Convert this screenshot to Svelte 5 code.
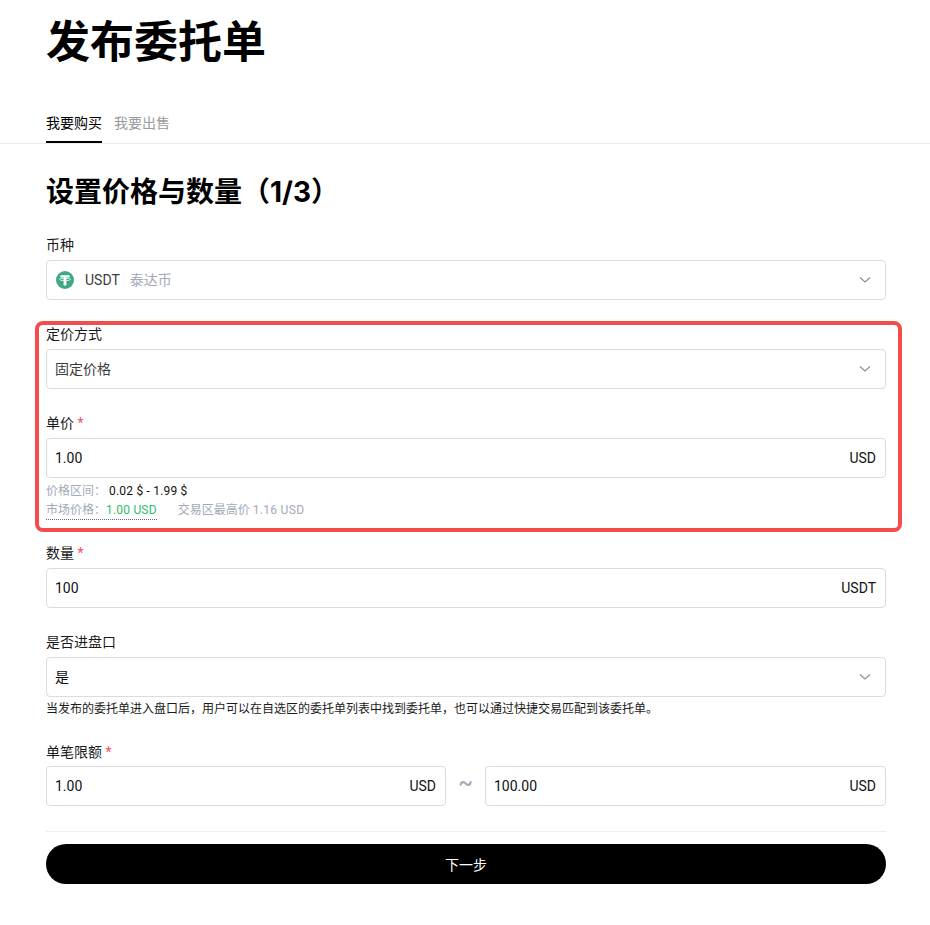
<script>
	const tabs = ['我要购买', '我要出售'];
</script>

{#snippet chevron()}
	<svg class="chevron" viewBox="0 0 12 8" width="12" height="8" aria-hidden="true">
		<path d="M1 1.5 L6 6 L11 1.5" />
	</svg>
{/snippet}

<main class="page">
	<h1>发布委托单</h1>

	<div class="tabs">
		{#each tabs as tab, i}
			<span class="tab" class:active={i === 0}>{tab}</span>
		{/each}
	</div>

	<form class="form">
		<h2>设置价格与数量（1/3）</h2>

		<div class="field">
			<div class="label">币种</div>
			<div class="box">
				<svg class="coin" viewBox="0 0 18 18" width="18" height="18" aria-hidden="true">
					<circle cx="9" cy="9" r="9" fill="#3fa886" />
					<path d="M4.4 4.2 H13.6 V6.6 H10.4 V14.4 H7.6 V6.6 H4.4 Z" fill="#fff" />
					<ellipse cx="9" cy="8.4" rx="5.6" ry="1.2" fill="none" stroke="#fff" stroke-width="0.7" />
				</svg>
				<span class="value">USDT</span>
				<span class="coin-name">泰达币</span>
				<span class="spacer"></span>
				{@render chevron()}
			</div>
		</div>

		<div class="field">
			<div class="label">定价方式</div>
			<div class="box">
				<span class="value">固定价格</span>
				<span class="spacer"></span>
				{@render chevron()}
			</div>
		</div>

		<div class="field price">
			<div class="label">单价 <em>*</em></div>
			<div class="box">
				<span class="value strong">1.00</span>
				<span class="spacer"></span>
				<span class="unit">USD</span>
			</div>
			<div class="hints">
				<div><span class="muted">价格区间：</span><span class="range">0.02 $ - 1.99 $</span></div>
				<div>
					<span class="market"><span class="muted">市场价格：</span><span class="green">1.00 USD</span></span>
					<span class="muted top">交易区最高价 <span class="num">1.16 USD</span></span>
				</div>
			</div>
		</div>

		<div class="field">
			<div class="label">数量 <em>*</em></div>
			<div class="box">
				<span class="value strong">100</span>
				<span class="spacer"></span>
				<span class="unit">USDT</span>
			</div>
		</div>

		<div class="field">
			<div class="label">是否进盘口</div>
			<div class="box">
				<span class="value strong">是</span>
				<span class="spacer"></span>
				{@render chevron()}
			</div>
			<p class="desc">当发布的委托单进入盘口后，用户可以在自选区的委托单列表中找到委托单，也可以通过快捷交易匹配到该委托单。</p>
		</div>

		<div class="field limits">
			<div class="label">单笔限额 <em>*</em></div>
			<div class="limit-row">
				<div class="box">
					<span class="value strong">1.00</span>
					<span class="spacer"></span>
					<span class="unit">USD</span>
				</div>
				<span class="tilde">~</span>
				<div class="box">
					<span class="value strong">100.00</span>
					<span class="spacer"></span>
					<span class="unit">USD</span>
				</div>
			</div>
		</div>

		<div class="footer">
			<button type="button" class="next">下一步</button>
		</div>
	</form>

	<div class="highlight"></div>
</main>

<style>
	:global(body) {
		margin: 0;
		background: #fff;
	}

	.page {
		position: relative;
		height: 925px;
		overflow: hidden;
		font-family: Roboto, "Noto Sans CJK SC", sans-serif;
		color: #000;
		font-size: 14px;
	}

	h1 {
		margin: 0;
		padding: 17px 0 0 46px;
		height: 79px;
		box-sizing: content-box;
		font-size: 44px;
		line-height: 52px;
		font-weight: 700;
	}

	.tabs {
		display: flex;
		gap: 12px;
		margin-top: 8px;
		padding-left: 46px;
		border-bottom: 1px solid #ececec;
		height: 39px;
		box-sizing: content-box;
	}

	.tab {
		line-height: 38px;
		height: 39px;
		color: #9b9b9b;
		box-sizing: border-box;
	}

	.tab.active {
		color: #000;
		border-bottom: 2px solid #000;
		height: 39px;
	}

	.form {
		width: 840px;
		margin-left: 46px;
	}

	h2 {
		margin: 28px 0 0;
		font-family: Inter, "Noto Sans CJK SC", sans-serif;
		font-size: 28px;
		line-height: 40px;
		font-weight: 700;
		height: 63px;
	}

	.field {
		margin-bottom: 24px;
	}

	.label {
		line-height: 20px;
		margin-bottom: 5px;
		color: #1a1a1a;
	}

	.label em {
		color: #f0545a;
		font-style: normal;
	}

	.box {
		display: flex;
		align-items: center;
		height: 40px;
		box-sizing: border-box;
		padding: 0 9px 0 8px;
		border: 1px solid #dcdcdc;
		border-radius: 4px;
		background: #fff;
		min-width: 0;
	}

	.box > span {
		line-height: 36px;
	}

	.spacer {
		flex: 1;
	}

	.coin {
		margin: 0 11px 0 1px;
	}

	.value {
		color: #3c3c3c;
	}

	.value.strong,
	.unit {
		color: #111;
	}

	.coin-name {
		color: #a3a9b8;
		margin-left: 10px;
	}

	.chevron {
		margin-right: 5px;
	}

	.chevron path {
		fill: none;
		stroke: #8d8d8d;
		stroke-width: 1.1;
	}

	.price {
		margin-bottom: 0;
		height: 130px;
	}

	.hints {
		margin-top: 4px;
		font-size: 12px;
		line-height: 19px;
	}

	.muted {
		color: #a3a9b8;
	}

	.range {
		margin-left: 3px;
		color: #111;
		letter-spacing: 0.2px;
	}

	.market {
		border-bottom: 1px dotted #5a6a9a;
		padding-bottom: 2px;
	}

	.green {
		color: #2fbd68;
		letter-spacing: 0.2px;
	}

	.top {
		margin-left: 18px;
	}

	.num {
		letter-spacing: 0.3px;
	}

	.desc {
		margin: 3px 0 0;
		font-size: 12px;
		line-height: 18px;
		color: #1a1a1a;
	}

	.limit-row {
		display: grid;
		grid-template-columns: 400px 39px 1fr;
		align-items: center;
	}

	.tilde {
		text-align: center;
		font-size: 22px;
		font-weight: 500;
		color: #a3a9b8;
		line-height: 1;
		margin-top: -6px;
	}

	.limits {
		margin-bottom: 25px;
	}

	.limits .label {
		margin-bottom: 4px;
	}

	.footer {
		border-top: 1px solid #eee;
		padding-top: 12px;
	}

	.next {
		display: block;
		width: 100%;
		height: 40px;
		border: 0;
		border-radius: 20px;
		background: #000;
		color: #fff;
		font: inherit;
	}

	/* annotation drawn over the form */
	.highlight {
		position: absolute;
		left: 35px;
		top: 321px;
		width: 867px;
		height: 211px;
		box-sizing: border-box;
		border: 4px solid #f44c4a;
		border-radius: 8px;
		pointer-events: none;
	}
</style>
